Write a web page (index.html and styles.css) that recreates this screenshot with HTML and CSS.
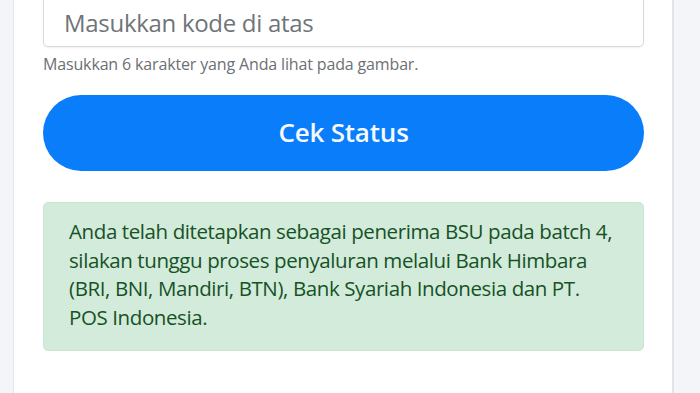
FILE: index.html
```html
<!DOCTYPE html>
<html lang="id">
<head>
<meta charset="utf-8">
<title>Cek Status BSU</title>
<link rel="stylesheet" href="styles.css">
</head>
<body>
<main class="page">
  <section class="card">
    <div class="field">
      <input class="code-input" type="text" placeholder="Masukkan kode di atas">
      <p class="help">Masukkan 6 karakter yang Anda lihat pada gambar.</p>
    </div>
    <button class="btn-primary" type="button">Cek Status</button>
    <div class="alert-success">
      <p>Anda telah ditetapkan sebagai penerima BSU pada batch 4, silakan tunggu proses penyaluran melalui Bank Himbara (BRI, BNI, Mandiri, BTN), Bank Syariah Indonesia dan PT. POS Indonesia.</p>
    </div>
  </section>
</main>
</body>
</html>
```
FILE: styles.css
```css
* { box-sizing: border-box; }
html, body {
  margin: 0;
  padding: 0;
  height: 100%;
  overflow: hidden;
}
body {
  background: #f4f5f8;
  font-family: "Open Sans", "Noto Sans", sans-serif;
}
.page {
  padding: 0 26px 0 13px;
}
.card {
  background: #ffffff;
  border-left: 1px solid #e6e6ea;
  border-right: 2px solid #e3e2e6;
  margin-top: -20px;
  padding: 0 28px 40px 29px;
  min-height: 500px;
}
.field {
  display: flex;
  flex-direction: column;
}
.code-input {
  height: 67px;
  width: 100%;
  border: 1px solid #d9dadd;
  border-radius: 5px;
  padding: 18px 20px 0 20px;
  font-family: "Open Sans", "Noto Sans", sans-serif;
  font-size: 24px;
  color: #495057;
  background: #fff;
  box-shadow: 0 1px 2px rgba(0,0,0,0.06);
  outline: none;
}
.code-input::placeholder {
  font-size: 24px;
  letter-spacing: -0.3px;
  color: #6f7479;
}
.help {
  margin: 6px 0 0 0;
  font-size: 16px;
  line-height: 22px;
  color: #6c7075;
  letter-spacing: -0.15px;
}
.btn-primary {
  display: block;
  width: 100%;
  height: 76px;
  margin-top: 20px;
  border: none;
  border-radius: 38px;
  background: #0a7dfb;
  color: #f4faff;
  font-family: inherit;
  font-weight: 600;
  font-size: 26px;
  letter-spacing: -0.2px;
  padding: 0 0 2px 0;
}
.alert-success {
  margin-top: 31px;
  background: #d3ebda;
  border: 1px solid #cbe5d1;
  border-radius: 5px;
  padding: 14px 28px 19px 25px;
}
.alert-success p {
  margin: 0;
  font-size: 20.5px;
  font-weight: 500;
  line-height: 28.5px;
  color: #165226;
  letter-spacing: -0.4px;
}
```
